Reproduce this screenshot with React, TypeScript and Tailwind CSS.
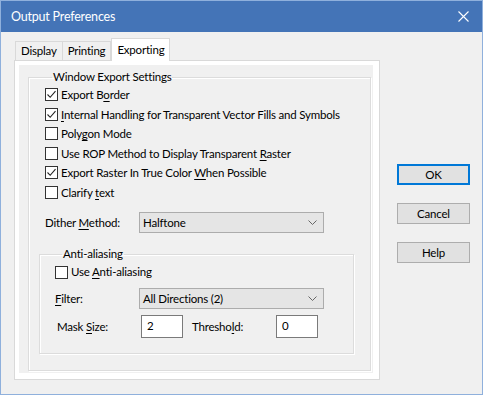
import type { ReactNode } from 'react';

const font = { fontFamily: 'Lato, "Noto Sans", sans-serif' };

function Key({ children }: { children: ReactNode }) {
  return <span className="underline underline-offset-2">{children}</span>;
}

function CheckBox({ checked }: { checked?: boolean }) {
  return (
    <span className="flex h-[13px] w-[13px] shrink-0 items-center justify-center border border-[#333333] bg-white">
      {checked && (
        <svg width="11" height="11" viewBox="0 0 11 11" fill="none">
          <path d="M1.5 5.5 L4.2 8.3 L9.5 2.2" stroke="#222" strokeWidth="1.1" />
        </svg>
      )}
    </span>
  );
}

function CheckRow({ checked, children }: { checked?: boolean; children: ReactNode }) {
  return (
    <div className="flex h-[19.5px] items-center gap-[3px] whitespace-nowrap">
      <CheckBox checked={checked} />
      <span>{children}</span>
    </div>
  );
}

function Chevron() {
  return (
    <svg width="9" height="5" viewBox="0 0 9 5" fill="none">
      <path d="M0.5 0.5 L4.5 4.5 L8.5 0.5" stroke="#666" strokeWidth="1" />
    </svg>
  );
}

function Select({ value }: { value: string }) {
  return (
    <div className="flex h-[21px] w-[185px] items-center justify-between border border-[#acacac] bg-[#e5e5e5] pl-[3px] pr-[6px]">
      <span>{value}</span>
      <Chevron />
    </div>
  );
}

function Button({ label, primary }: { label: string; primary?: boolean }) {
  return (
    <button
      type="button"
      className={
        primary
          ? 'h-[21px] w-[73px] border-2 border-[#0078d7] bg-[#e1e1e1]'
          : 'h-[21px] w-[73px] border border-[#adadad] bg-[#e1e1e1]'
      }
    >
      {label}
    </button>
  );
}

const groupBorder = 'border border-[#dcdcdc] shadow-[1px_1px_0_#ffffff,inset_1px_1px_0_#ffffff]';

function App() {
  return (
    <div
      style={font}
      className="flex h-[395px] w-[483px] flex-col border border-[#8fb0dc] bg-[#f0f0f0] text-[11.5px] tracking-[-0.2px] text-black"
    >
      <div className="flex h-[31px] shrink-0 items-center justify-between bg-[#4474b7] pl-[10px] pr-[13px] text-white">
        <span className="pt-[1px] text-[12.5px]">Output Preferences</span>
        <svg width="11" height="11" viewBox="0 0 11 11" fill="none">
          <path d="M0.5 0.5 L10.5 10.5 M10.5 0.5 L0.5 10.5" stroke="#fff" strokeWidth="1.1" />
        </svg>
      </div>

      <div className="flex pl-[13px] pt-[6px]">
        <div className="flex flex-col">
          <div className="flex h-[22px] items-end pl-[1px]">
            <div className="flex h-[19px] items-center border border-b-0 border-[#d9d9d9] px-[5px]">Display</div>
            <div className="flex h-[19px] items-center border border-b-0 border-l-0 border-[#d9d9d9] px-[5px]">Printing</div>
            <div className="relative -mb-px flex h-[23px] items-start border border-b-0 border-[#d9d9d9] bg-white px-[5px] pt-[2px]">
              Exporting
            </div>
          </div>

          <div className="h-[320px] w-[366px] border border-[#d9d9d9] bg-white pb-[6px] pl-[4px] pr-[6px] pt-[4px]">
            <div className="h-full w-full bg-[#f0f0f0] pl-[9px] pr-[8px] pt-[4px]">
              <fieldset className={`${groupBorder} h-[302px] w-[337px] px-[16px]`}>
                <legend className="ml-[7px] px-[1px] leading-[16px]">Window Export Settings</legend>
                <div className="flex flex-col">
                  <CheckRow checked>
                    Export B<Key>o</Key>rder
                  </CheckRow>
                  <CheckRow checked>
                    <Key>I</Key>nternal Handling for Transparent Vector Fills and Symbols
                  </CheckRow>
                  <CheckRow>
                    Poly<Key>g</Key>on Mode
                  </CheckRow>
                  <CheckRow>
                    Use ROP Method to Display Transparent <Key>R</Key>aster
                  </CheckRow>
                  <CheckRow checked>
                    Export Raster In True Color <Key>W</Key>hen Possible
                  </CheckRow>
                  <CheckRow>
                    Clarify <Key>t</Key>ext
                  </CheckRow>
                </div>

                <div className="mt-[10px] flex items-center">
                  <span className="w-[94px]">
                    Dither <Key>M</Key>ethod:
                  </span>
                  <Select value="Halftone" />
                </div>

                <fieldset className={`${groupBorder} -ml-[6px] mt-[13px] h-[108px] w-[315px] pl-[15px]`}>
                  <legend className="ml-[7px] px-[1px] leading-[16px]">Anti-aliasing</legend>
                  <div className="flex h-[20px] items-center gap-[3px]">
                    <CheckBox />
                    <span>
                      Use <Key>A</Key>nti-aliasing
                    </span>
                  </div>
                  <div className="mt-[6px] flex items-center">
                    <span className="w-[84px]">
                      <Key>F</Key>ilter:
                    </span>
                    <Select value="All Directions (2)" />
                  </div>
                  <div className="mt-[6px] flex items-center">
                    <span className="w-[86px] pl-[2px]">
                      Mask <Key>S</Key>ize:
                    </span>
                    <div className="flex h-[23px] w-[42px] items-start border border-[#7a7a7a] bg-white pl-[5px] pt-[1px]">2</div>
                    <span className="ml-[9px] w-[84px]">
                      Thresho<Key>l</Key>d:
                    </span>
                    <div className="flex h-[23px] w-[42px] items-start border border-[#7a7a7a] bg-white pl-[5px] pt-[1px]">0</div>
                  </div>
                </fieldset>
              </fieldset>
            </div>
          </div>
        </div>

        <div className="ml-[17px] flex flex-col gap-[18px] pt-[126px]">
          <Button label="OK" primary />
          <Button label="Cancel" />
          <Button label="Help" />
        </div>
      </div>
    </div>
  );
}

export default App;
